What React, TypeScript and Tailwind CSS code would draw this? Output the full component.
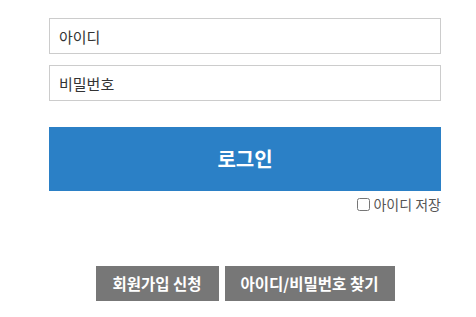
import React, { useState } from 'react';

const font = { fontFamily: '"Noto Sans CJK KR", "Noto Sans", sans-serif' };

const App: React.FC = () => {
  const [userId, setUserId] = useState('');
  const [password, setPassword] = useState('');
  const [saveId, setSaveId] = useState(false);

  return (
    <div className="min-h-screen bg-white pt-[18px]" style={font}>
      <form
        onSubmit={(e) => e.preventDefault()}
        className="ml-[49px] w-[392px] flex flex-col"
      >
        {/* Inputs */}
        <input
          type="text"
          placeholder="아이디"
          value={userId}
          onChange={(e) => setUserId(e.target.value)}
          className="h-[36px] w-full border border-[#cccccc] px-[9px] text-[15px] text-[#333] placeholder:text-[#333] focus:outline-none"
        />
        <input
          type="password"
          placeholder="비밀번호"
          value={password}
          onChange={(e) => setPassword(e.target.value)}
          className="mt-[11px] h-[36px] w-full border border-[#cccccc] px-[9px] text-[15px] text-[#333] placeholder:text-[#333] focus:outline-none"
        />

        <button
          type="submit"
          className="mt-[26px] h-[64px] w-full bg-[#2b80c6] text-[20px] font-bold text-white"
        >
          로그인
        </button>

        <label className="mt-[4px] flex items-center justify-end gap-[3px] text-[14px] leading-[18px] text-[#555]">
          <input
            type="checkbox"
            checked={saveId}
            onChange={(e) => setSaveId(e.target.checked)}
            className="h-[13px] w-[13px]"
          />
          아이디 저장
        </label>

        {/* Bottom links */}
        <div className="mt-[53px] flex justify-center gap-[6px]">
          <button
            type="button"
            className="h-[35px] w-[123px] bg-[#777777] text-[15.5px] font-bold text-white"
          >
            회원가입 신청
          </button>
          <button
            type="button"
            className="h-[35px] w-[170px] bg-[#777777] text-[15.5px] font-bold text-white"
          >
            아이디/비밀번호 찾기
          </button>
        </div>
      </form>
    </div>
  );
};

export default App;
